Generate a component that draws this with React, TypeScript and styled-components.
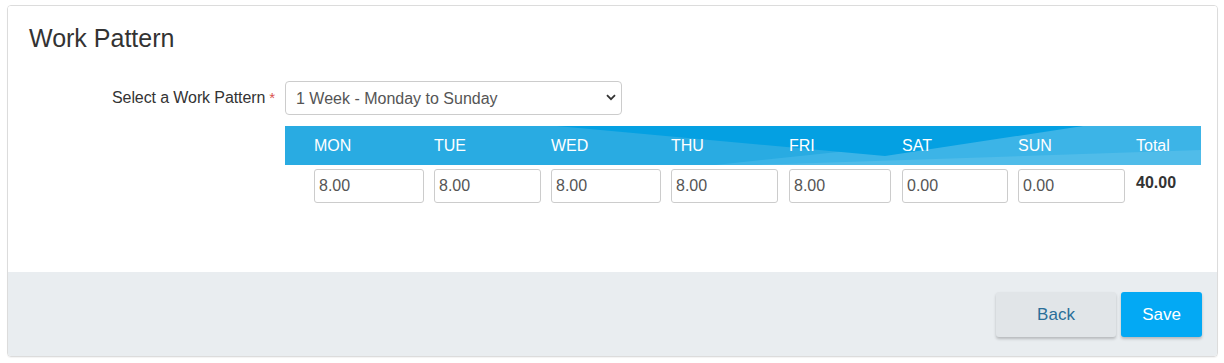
import React from "react";
import styled, {createGlobalStyle} from "styled-components";

const GlobalStyle = createGlobalStyle`
  body {
    margin: 0;
    background: #ffffff;
    font-family: "Liberation Sans", Arial, sans-serif;
  }
`

const Card = styled.div`
  margin: 5px 6px 6px 7px;
  height: 352px;
  box-sizing: border-box;
  border: 1px solid #dcdcdc;
  border-radius: 4px;
  display: flex;
  flex-direction: column;
  overflow: hidden;
  box-shadow: 0 1px 1px rgba(0, 0, 0, 0.05);
`

const Body = styled.div`
  flex: 1;
  padding: 19px 15px 0 0;
  background: #ffffff;
`

const Title = styled.h2`
  margin: 0 0 0 21px;
  font-size: 25px;
  font-weight: normal;
  line-height: 27px;
  color: #333333;
`

const FormRow = styled.div`
  display: flex;
  align-items: center;
  margin-top: 29px;
`

const Label = styled.label`
  width: 277px;
  box-sizing: border-box;
  padding-right: 10px;
  text-align: right;
  font-size: 16px;
  letter-spacing: -0.1px;
  color: #333333;
`

const Required = styled.span`
  color: #d9534f;
  margin-left: 4px;
  font-size: 15px;
`

const SelectBox = styled.div`
  position: relative;
  width: 337px;
`

const Select = styled.select`
  width: 100%;
  height: 34px;
  padding: 0 30px 0 10px;
  border: 1px solid #cccccc;
  border-radius: 4px;
  background: #ffffff;
  appearance: none;
  font-family: "Liberation Sans", Arial, sans-serif;
  font-size: 16px;
  color: #555555;
`

const Chevron = styled.svg`
  position: absolute;
  right: 6px;
  top: 13px;
  width: 10px;
  height: 7px;
  pointer-events: none;
`

const Pattern = styled.div`
  margin: 11px 0 0 277px;
  width: 916px;
`

const Columns = styled.div`
  display: grid;
  grid-template-columns: 120px 117px 120px 118px 113px 116px 118px 1fr;
  padding-left: 29px;
`

const HeaderBand = styled.div`
  position: relative;
  height: 39px;
  background: #29abe2;
  overflow: hidden;
`

const Waves = styled.svg`
  position: absolute;
  inset: 0;
  width: 100%;
  height: 100%;
`

const HeaderRow = styled(Columns)`
  position: relative;
  height: 39px;
  align-items: center;
`

const DayName = styled.span`
  font-size: 16px;
  color: #ffffff;
  padding-top: 1px;
`

const InputRow = styled(Columns)`
  padding-top: 4px;
  align-items: start;
`

const HoursInput = styled.input<{$trim: number}>`
  width: calc(100% - ${p => p.$trim}px);
  height: 34px;
  box-sizing: border-box;
  padding: 0 4px;
  border: 1px solid #cccccc;
  border-radius: 3px;
  font-family: "Liberation Sans", Arial, sans-serif;
  font-size: 16px;
  color: #555555;
  outline: none;
`

const Total = styled.span`
  padding-top: 5px;
  font-size: 16px;
  font-weight: bold;
  color: #333333;
`

const Footer = styled.div`
  height: 84px;
  box-sizing: border-box;
  background: #e9edf0;
  display: flex;
  justify-content: flex-end;
  align-items: flex-start;
  gap: 5px;
  padding: 20px 15px 0 0;
`

const Button = styled.button<{$primary?: boolean}>`
  width: ${p => p.$primary ? 81 : 120}px;
  height: 45px;
  padding: 0;
  border: none;
  border-radius: 3px;
  font-family: "Liberation Sans", Arial, sans-serif;
  font-size: 17px;
  cursor: pointer;
  background: ${p => p.$primary ? "#03a9f4" : "#e1e5e8"};
  color: ${p => p.$primary ? "#ffffff" : "#2a6e98"};
  box-shadow: 0 2px 3px rgba(0, 0, 0, 0.22);
`

const days = [
    {name: "MON", hours: "8.00", trim: 10},
    {name: "TUE", hours: "8.00", trim: 10},
    {name: "WED", hours: "8.00", trim: 10},
    {name: "THU", hours: "8.00", trim: 11},
    {name: "FRI", hours: "8.00", trim: 11},
    {name: "SAT", hours: "0.00", trim: 10},
    {name: "SUN", hours: "0.00", trim: 11},
]

const App = () => {
    return (
        <>
            <GlobalStyle/>
            <Card>
                <Body>
                    <Title>Work Pattern</Title>
                    <FormRow>
                        <Label>Select a Work Pattern<Required>*</Required></Label>
                        <SelectBox>
                            <Select defaultValue="1w">
                                <option value="1w">1 Week - Monday to Sunday</option>
                                <option value="2w">2 Week - Monday to Sunday</option>
                            </Select>
                            <Chevron viewBox="0 0 10 7">
                                <path d="M1 1.2 L5 5.2 L9 1.2" fill="none" stroke="#333" strokeWidth="1.8"/>
                            </Chevron>
                        </SelectBox>
                    </FormRow>
                    <Pattern>
                        <HeaderBand>
                            <Waves viewBox="0 0 916 39" preserveAspectRatio="none">
                                <polygon points="798,0 916,0 916,39 430,39" fill="#3cb4e7"/>
                                <polygon points="272,0 798,0 600,30" fill="#04a0e2"/>
                                <polygon points="470,39 916,24 916,39" fill="#50bce9"/>
                            </Waves>
                            <HeaderRow>
                                {days.map(d => <DayName key={d.name}>{d.name}</DayName>)}
                                <DayName>Total</DayName>
                            </HeaderRow>
                        </HeaderBand>
                        <InputRow>
                            {days.map(d => (
                                <HoursInput key={d.name} $trim={d.trim} defaultValue={d.hours}/>
                            ))}
                            <Total>40.00</Total>
                        </InputRow>
                    </Pattern>
                </Body>
                <Footer>
                    <Button>Back</Button>
                    <Button $primary>Save</Button>
                </Footer>
            </Card>
        </>
    );
}

export default App;
